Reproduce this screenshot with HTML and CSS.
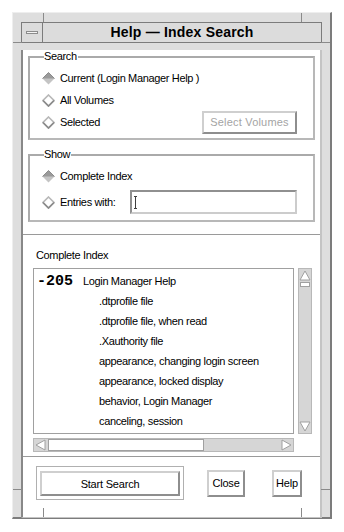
FILE: index.html
```html
<!DOCTYPE html>
<html lang="en">
<head>
  <meta charset="UTF-8">
  <meta name="viewport" content="width=device-width, initial-scale=1">
  <title>Help - Index Search</title>
  <link rel="stylesheet" href="styles.css">
</head>
<body>
  <div class="window">
    <!-- frame resize notches -->
    <span class="notch v top-l"></span>
    <span class="notch v top-r"></span>
    <span class="notch v bot-l"></span>
    <span class="notch v bot-r"></span>
    <span class="notch h side-tl"></span>
    <span class="notch h side-tr"></span>
    <span class="notch h side-bl"></span>
    <span class="notch h side-br"></span>

    <div class="titlebar">
      <div class="menu-btn"><span class="menu-bar"></span></div>
      <div class="title">Help &#8212; Index Search</div>
    </div>

    <div class="client">
      <!-- Search -->
      <fieldset class="group search">
        <legend>Search</legend>
        <div class="row">
          <svg class="diamond" width="13" height="13" viewBox="0 0 13 13"><polygon points="6.5,0.5 12.5,6.5 6.5,12.5 0.5,6.5" fill="#c4c4c4"/><polyline points="0.5,6.5 6.5,0.5 12.5,6.5" fill="#9a9a9a" stroke="#8c8c8c"/></svg>
          <span>Current (Login Manager Help )</span>
        </div>
        <div class="row">
          <svg class="diamond" width="13" height="13" viewBox="0 0 13 13"><polygon points="6.5,1 12,6.5 6.5,12 1,6.5" fill="#fff" stroke="#b8b8b8" stroke-width="1.6"/><polyline points="1,6.5 6.5,12 12,6.5" fill="none" stroke="#8a8a8a" stroke-width="1.6"/></svg>
          <span>All Volumes</span>
        </div>
        <div class="row">
          <svg class="diamond" width="13" height="13" viewBox="0 0 13 13"><polygon points="6.5,1 12,6.5 6.5,12 1,6.5" fill="#fff" stroke="#b8b8b8" stroke-width="1.6"/><polyline points="1,6.5 6.5,12 12,6.5" fill="none" stroke="#8a8a8a" stroke-width="1.6"/></svg>
          <span>Selected</span>
          <button class="btn select-vol" disabled>Select Volumes</button>
        </div>
      </fieldset>

      <!-- Show -->
      <fieldset class="group show">
        <legend>Show</legend>
        <div class="row">
          <svg class="diamond" width="13" height="13" viewBox="0 0 13 13"><polygon points="6.5,0.5 12.5,6.5 6.5,12.5 0.5,6.5" fill="#c4c4c4"/><polyline points="0.5,6.5 6.5,0.5 12.5,6.5" fill="#9a9a9a" stroke="#8c8c8c"/></svg>
          <span>Complete Index</span>
        </div>
        <div class="row tall">
          <svg class="diamond" width="13" height="13" viewBox="0 0 13 13"><polygon points="6.5,1 12,6.5 6.5,12 1,6.5" fill="#fff" stroke="#b8b8b8" stroke-width="1.6"/><polyline points="1,6.5 6.5,12 12,6.5" fill="none" stroke="#8a8a8a" stroke-width="1.6"/></svg>
          <span>Entries with:</span>
          <div class="field"><span class="ibeam"></span></div>
        </div>
      </fieldset>

      <div class="sep"></div>

      <div class="list-label">Complete Index</div>

      <div class="list-wrap">
        <div class="list">
          <div class="item"><span class="code">-205</span>Login Manager Help</div>
          <div class="item sub">.dtprofile file</div>
          <div class="item sub">.dtprofile file, when read</div>
          <div class="item sub">.Xauthority file</div>
          <div class="item sub">appearance, changing login screen</div>
          <div class="item sub">appearance, locked display</div>
          <div class="item sub">behavior, Login Manager</div>
          <div class="item sub">canceling, session</div>
        </div>
        <div class="vscroll">
          <svg width="12" height="11" viewBox="0 0 12 11"><polygon points="6,1 11,10 1,10" fill="#fff" stroke="#a0a0a0"/></svg>
          <span class="vthumb"></span>
          <svg class="down" width="12" height="11" viewBox="0 0 12 11"><polygon points="1,1 11,1 6,10" fill="#fff" stroke="#a0a0a0"/></svg>
        </div>
      </div>
      <div class="hscroll">
        <svg width="11" height="12" viewBox="0 0 11 12"><polygon points="1,6 10,1 10,11" fill="#fff" stroke="#a0a0a0"/></svg>
        <span class="hthumb"></span>
        <svg class="right" width="11" height="12" viewBox="0 0 11 12"><polygon points="1,1 10,6 1,11" fill="#fff" stroke="#a0a0a0"/></svg>
      </div>

      <div class="sep low"></div>

      <div class="actions">
        <div class="default-ring"><button class="btn start">Start Search</button></div>
        <button class="btn close">Close</button>
        <button class="btn help">Help</button>
      </div>
    </div>
  </div>
</body>
</html>
```

FILE: styles.css
```css
body {
  margin: 0;
  background: #fff;
  font-family: "Liberation Sans", Arial, sans-serif;
  font-size: 11px;
  letter-spacing: -0.35px;
  color: #000;
}

/* window frame */
.window {
  position: relative;
  box-sizing: border-box;
  width: 320px;
  height: 507px;
  margin: 12px 0 0 12px;
  padding: 9px 8px 8px 8px;
  background: #dedede;
  border-top: 1px solid #eeeeee;
  border-left: 1px solid #eeeeee;
  border-right: 2px solid #7c7c7c;
  border-bottom: 2px solid #7c7c7c;
}
.notch {
  position: absolute;
  background: #8a8a8a;
}
.notch.v { width: 1px; height: 9px; }
.notch.h { width: 9px; height: 1px; }
.top-l { left: 30px; top: 0; }
.top-r { left: 288px; top: 0; }
.bot-l { left: 30px; bottom: 0; }
.bot-r { left: 288px; bottom: 0; }
.side-tl { left: 0; top: 29px; }
.side-tr { right: 0; top: 29px; }
.side-bl { left: 0; top: 476px; }
.side-br { right: 0; top: 476px; }

/* title bar */
.titlebar {
  display: flex;
  height: 21px;
  box-sizing: border-box;
  border: 1px solid #7c7c7c;
  background: #dcdcdc;
}
.menu-btn {
  width: 20px;
  display: flex;
  align-items: center;
  justify-content: center;
  border-right: 1px solid #7c7c7c;
}
.menu-bar {
  width: 12px;
  height: 3px;
  background: #f4f4f4;
  border: 1px solid #8c8c8c;
  box-sizing: border-box;
}
.title {
  flex: 1;
  text-align: center;
  font-weight: bold;
  font-size: 14px;
  line-height: 19px;
  letter-spacing: 0.2px;
}

/* client area */
.client {
  box-sizing: border-box;
  height: 468px;
  background: #fff;
  border-left: 2px solid #888;
  border-right: 2px solid #c4c4c4;
  border-bottom: 1px solid #c4c4c4;
  padding: 0 5px 0 5px;
}

.group {
  margin: 7px 0 0 0;
  padding: 0 0 5px 12px;
  border: 2px solid #aaaaaa;
  border-right-color: #b8b8b8;
  border-bottom-color: #b8b8b8;
}
.group legend {
  margin-left: 2px;
  padding: 0 1px 0 0;
  line-height: 13px;
}
.search { padding-top: 4px; }
.show { margin-top: 8px; padding-top: 4px; }

.row {
  display: flex;
  align-items: center;
  height: 22px;
}
.row.tall { height: 26px; margin-top: 2px; }
.diamond { margin-right: 5px; flex: none; }

.btn {
  font-family: "Liberation Sans", Arial, sans-serif;
  font-size: 11px;
  letter-spacing: -0.2px;
  color: #000;
  background: #fff;
  padding: 0;
  box-sizing: border-box;
  border: 2px solid;
  border-color: #cfcfcf #8e8e8e #8e8e8e #cfcfcf;
}
.select-vol {
  margin-left: auto;
  margin-right: 16px;
  width: 95px;
  height: 23px;
  color: #a4a4a4;
  letter-spacing: 0.2px;
}

.field {
  box-sizing: border-box;
  width: 167px;
  height: 24px;
  margin-left: auto;
  margin-right: 16px;
  border: 2px solid;
  border-color: #909090 #cccccc #cccccc #909090;
  display: flex;
  align-items: center;
  padding-left: 2px;
}
.ibeam {
  width: 3px;
  height: 11px;
  border-top: 1px solid #000;
  border-bottom: 1px solid #000;
  background: linear-gradient(#000, #000) center / 1px 100% no-repeat;
  opacity: 0.75;
}

.sep {
  height: 1px;
  margin: 12px -5px 0 -5px;
  border-top: 1px solid #9a9a9a;
  background: #fff;
}
.sep.low { margin-top: 4px; }

.list-label {
  margin: 13px 0 0 8px;
  line-height: 13px;
}

.list-wrap {
  display: flex;
  margin: 6px 0 0 5px;
}
.list {
  box-sizing: border-box;
  width: 261px;
  height: 166px;
  border: 1px solid #a0a0a0;
  padding: 2px 0 0 3px;
  overflow: hidden;
}
.item {
  height: 20px;
  line-height: 20px;
  white-space: nowrap;
}
.item.sub { padding-left: 62px; }
.code {
  display: inline-block;
  width: 46px;
  font-family: "Liberation Mono", "DejaVu Sans Mono", monospace;
  font-weight: bold;
  font-size: 15px;
  letter-spacing: 0;
}

.vscroll {
  box-sizing: border-box;
  width: 14px;
  height: 166px;
  margin-left: 4px;
  background: #d6d6d6;
  border: 1px solid #b8b8b8;
  display: flex;
  flex-direction: column;
  align-items: center;
  padding-top: 1px;
}
.vthumb {
  width: 10px;
  height: 5px;
  margin-top: 1px;
  background: #fff;
  border: 1px solid #a0a0a0;
  box-sizing: border-box;
}
.vscroll .down { margin-top: auto; margin-bottom: 1px; }

.hscroll {
  box-sizing: border-box;
  width: 261px;
  height: 14px;
  margin: 4px 0 0 5px;
  background: #d6d6d6;
  border: 1px solid #b8b8b8;
  display: flex;
  align-items: center;
  padding-left: 1px;
}
.hthumb {
  width: 156px;
  height: 12px;
  margin-left: 2px;
  background: #fff;
  border: 1px solid #a0a0a0;
  box-sizing: border-box;
}
.hscroll .right { margin-left: auto; margin-right: 1px; }

.actions {
  display: flex;
  align-items: center;
  margin: 8px 0 0 8px;
}
.default-ring {
  box-sizing: border-box;
  width: 148px;
  height: 34px;
  border: 1px solid #b0b0b0;
  padding: 4px 3px 3px 3px;
}
.start {
  width: 140px;
  height: 25px;
}
.close {
  width: 38px;
  height: 27px;
  margin-left: 23px;
}
.help {
  width: 30px;
  height: 27px;
  margin-left: 27px;
}
```
